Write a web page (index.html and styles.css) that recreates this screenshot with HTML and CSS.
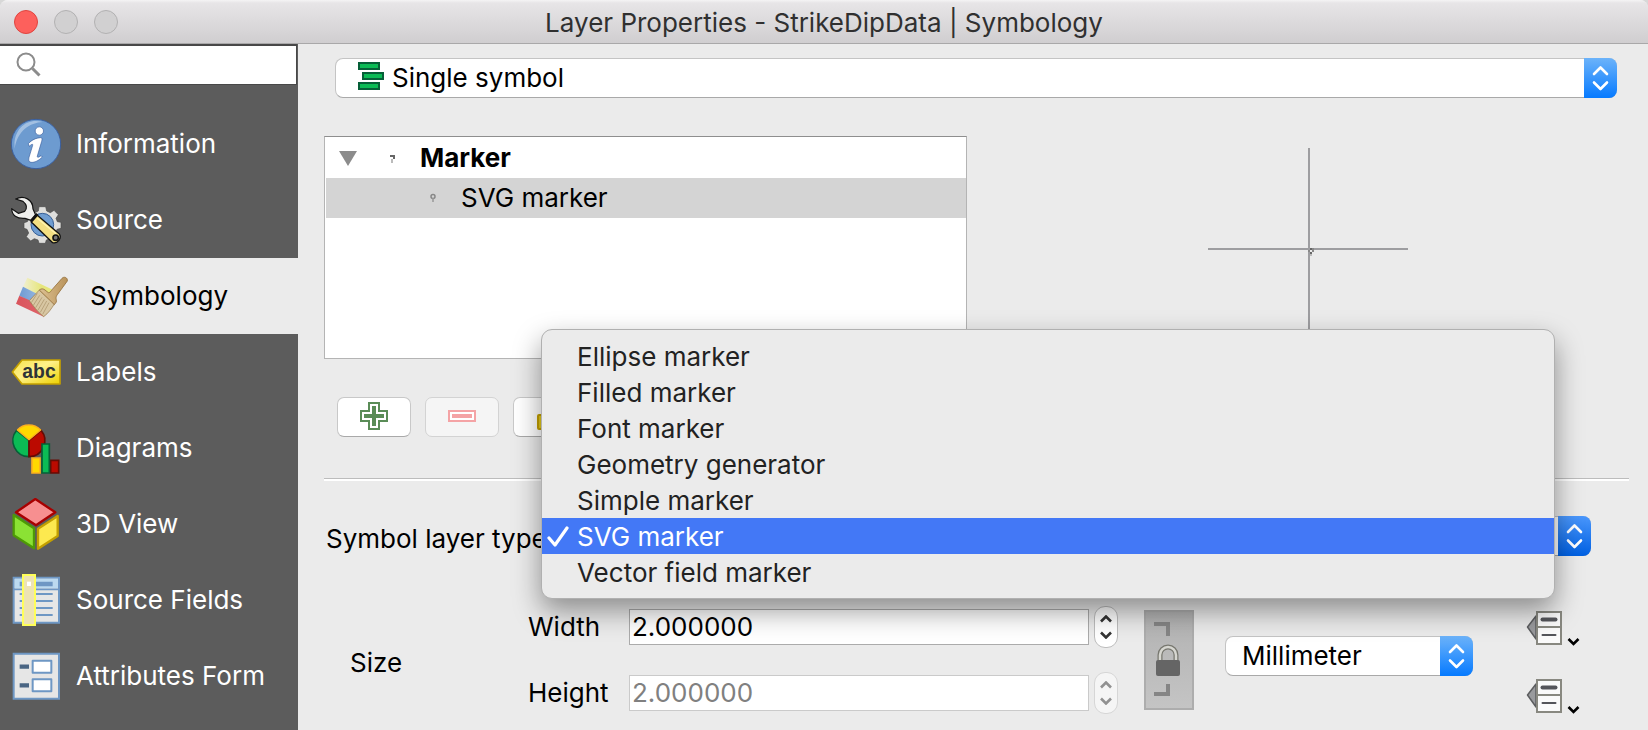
FILE: index.html
```html
<!DOCTYPE html>
<html lang="en">
<head>
<meta charset="utf-8">
<title>Layer Properties - StrikeDipData | Symbology</title>
<link rel="stylesheet" href="styles.css">
</head>
<body>
<svg class="defs" aria-hidden="true">
  <symbol id="updown" viewBox="0 0 33 40"><path d="M10 16l6.500-6.500L23 16M10 24.500l6.500 6.500L23 24.500" fill="none" stroke="#fff" stroke-width="2.600" stroke-linecap="round" stroke-linejoin="round"/></symbol>
  <symbol id="override" viewBox="0 0 54 38">
    <path d="M10 5L1.500 16L10 28z" fill="#999a9d" stroke="#5c5d5f" stroke-width="1.500" stroke-linejoin="round"/>
    <path d="M11 1h24v32H11zM11 16h24" fill="#fafafa" stroke="#888880" stroke-width="2"/>
    <path d="M16.500 8.500h13" stroke="#54555a" stroke-width="4" stroke-linecap="round"/>
    <path d="M16.500 24h13" stroke="#54555a" stroke-width="2" stroke-linecap="round"/>
    <path d="M42.500 28l5 5l5-5" fill="none" stroke="#000" stroke-width="2.600"/>
  </symbol>
</svg>
<div class="window">
  <header class="titlebar">
    <div class="lights">
      <button class="light close" aria-label="Close"></button>
      <button class="light" aria-label="Minimize"></button>
      <button class="light" aria-label="Zoom"></button>
    </div>
    <h1 class="title">Layer Properties - StrikeDipData | Symbology</h1>
  </header>
  <div class="body">
    <aside class="sidebar">
      <div class="search">
        <svg class="search-icon" viewBox="0 0 26 26" aria-hidden="true"><circle cx="10" cy="10" r="8.500" fill="none" stroke="#8c8c8c" stroke-width="2"/><path d="M16.500 16.500l7 7" stroke="#8c8c8c" stroke-width="3"/></svg>
        <input class="search-input" type="text" aria-label="Search">
      </div>
      <nav class="nav">
        <a class="nav-item" href="#information">
          <svg class="nav-icon" viewBox="30 354 156 156" aria-hidden="true">
            <circle cx="108" cy="432" r="74" fill="#6d9bd0" stroke="#3b5f9e" stroke-width="3"/>
            <path d="M44 446C38 386 82 352 128 366C90 368 52 392 44 446z" fill="#a3c0e2"/>
            <circle cx="118" cy="393" r="12.500" fill="#fff" stroke="#3b5f9e" stroke-width="2"/>
            <path d="M85 431C96 419 108 414 122 413C127 413 127 418 125 424L112 468C111 474 116 472 123 467L127 471C116 482 104 488 93 487C86 486 85 480 87 472L98 436C99 431 95 432 88 439z" fill="#fff" stroke="#3b5f9e" stroke-width="2"/>
          </svg>
          <span>Information</span></a>
        <a class="nav-item" href="#source">
          <svg class="nav-icon" viewBox="30 582 156 156" aria-hidden="true">
            <path d="M117 620h20l3 13l11 5l11-7l13 13l-7 11l4 10l11 2v18l-12 3l-4 11l7 11l-13 13l-11-7l-11 4l-3 10h-19l-3-10l-11-4l-11 7l-13-13l7-11l-5-11l-9-3v-17l10-3l5-10l-7-11l13-13l11 7l11-5z" fill="#dededc" stroke="#4a4a4a" stroke-width="2"/>
            <circle cx="127" cy="674" r="34" fill="#6f9dd1" stroke="#365f96" stroke-width="3"/>
            <path d="M47 597C72 584 99 599 99 627L107 645L93 661L75 655C50 657 36 646 35 626L55 640L74 634C83 624 80 613 69 604z" fill="#eeeeec" stroke="#111" stroke-width="3.500" stroke-linejoin="round"/>
            <path d="M111 645l67 57c8 12-5 30-20 26L93 665z" fill="#f3df82" stroke="#111" stroke-width="4" stroke-linejoin="round"/>
            <path d="M112 655l56 46" stroke="#fff3b0" stroke-width="4"/>
            <path d="M112 642l-18 21" stroke="#111" stroke-width="9"/>
            <circle cx="167" cy="713" r="8" fill="#777" stroke="#111" stroke-width="5"/>
          </svg>
          <span>Source</span></a>
        <a class="nav-item current" href="#symbology" aria-current="page">
          <svg class="nav-icon" viewBox="48 60 156 156" aria-hidden="true">
            <defs>
              <linearGradient id="ye" x1="0" x2="1"><stop offset="0" stop-color="#f1efd0"/><stop offset=".6" stop-color="#e6e67c"/></linearGradient>
              <linearGradient id="bl" x1="0" x2="1"><stop offset="0" stop-color="#6f9bd3"/><stop offset="1" stop-color="#a5c3e6"/></linearGradient>
              <linearGradient id="rd" x1="0" x2="1"><stop offset="0" stop-color="#d9545c"/><stop offset="1" stop-color="#e0646b"/></linearGradient>
              <linearGradient id="wd" x1="0" x2="1"><stop offset="0" stop-color="#dcc092"/><stop offset="1" stop-color="#b9935a"/></linearGradient>
            </defs>
            <path d="M82 83L160 120L140 150L69 110z" fill="url(#ye)"/>
            <path d="M69 110L140 146L130 175L58 137z" fill="url(#bl)"/>
            <path d="M58 137L142 174L131 200L48 161z" fill="url(#rd)"/>
            <path d="M118 120L88 152C100 168 112 185 131 200C145 190 155 175 163 162z" fill="#d8c7a3" stroke="#957546" stroke-width="2"/>
            <path d="M112 130l-18 28M119 136l-19 30M126 142l-19 31M133 148l-19 32M140 153l-19 34M147 158l-19 35" stroke="#a89067" stroke-width="2"/>
            <path d="M118 120C124 115 130 116 135 120L145 128C151 128 153 123 157 118L186 85C192 78 204 83 202 93L172 134C165 143 170 147 169 156L163 164z" fill="url(#wd)" stroke="#94703d" stroke-width="2.500"/>
          </svg>
          <span>Symbology</span></a>
        <a class="nav-item" href="#labels">
          <svg class="nav-icon" viewBox="30 288 156 156" aria-hidden="true">
            <defs><linearGradient id="tag" x2="1" y2="1"><stop offset="0" stop-color="#f7e34c"/><stop offset=".45" stop-color="#fff18a"/><stop offset="1" stop-color="#ecd000"/></linearGradient></defs>
            <path d="M37 366L66 330H180V402H66z" fill="url(#tag)" stroke="#c4a000" stroke-width="5" stroke-linejoin="round"/>
            <text class="tag-text" x="67" y="384">abc</text>
          </svg>
          <span>Labels</span></a>
        <a class="nav-item" href="#diagrams">
          <svg class="nav-icon" viewBox="30 516 156 156" aria-hidden="true">
            <path d="M87 571V620A48 48 0 0 1 50 541z" fill="#0bbb55" stroke="#065f38" stroke-width="5" stroke-linejoin="round"/>
            <path d="M87 571V620A48 48 0 0 0 123 541z" fill="#bb0a00" stroke="#660b04" stroke-width="5" stroke-linejoin="round"/>
            <path d="M87 569L52 540C70 520 103 520 122 540z" fill="#ffd800" stroke="#fcaf1f" stroke-width="4" stroke-linejoin="round"/>
            <path d="M96 624h24v45h-24z" fill="#ffd800" stroke="#fcaf1f" stroke-width="5"/>
            <path d="M152 631h24v38h-24z" fill="#bb0a00" stroke="#660b04" stroke-width="5"/>
            <path d="M126 582h22v87h-22z" fill="#0bbb55" stroke="#065f38" stroke-width="5"/>
          </svg>
          <span>Diagrams</span></a>
        <a class="nav-item" href="#view3d">
          <svg class="nav-icon" viewBox="30 54 156 156" aria-hidden="true">
            <g stroke-width="7" stroke-linejoin="round"><path d="M106 57L166 97L108 136L48 97z" fill="#f78f90" stroke="#a80000"/>
            <path d="M41 105L102 145V205L41 166z" fill="#8be234" stroke="#4d9a06"/>
            <path d="M173 108L114 146V206L173 168z" fill="#fde94f" stroke="#c4a000"/></g>
          </svg>
          <span>3D View</span></a>
        <a class="nav-item" href="#fields">
          <svg class="nav-icon" viewBox="30 282 156 156" aria-hidden="true">
            <path d="M41 293h136v135H41z" fill="#e6e6e6" stroke="#6e97c4" stroke-width="6"/>
            <path d="M44 296h130v29H44z" fill="#bcdaf0"/>
            <path d="M41 328h136" stroke="#6e97c4" stroke-width="5"/>
            <path d="M59 312h99" stroke="#6e97c4" stroke-width="13"/>
            <path d="M59 342h99M59 363h99M59 384h99M59 405h99" stroke="#6e97c4" stroke-width="6"/>
            <path d="M69 285h36v150H69z" fill="#ede3b4" stroke="#ffff58" stroke-width="6"/>
            <path d="M81 305h12v13H81z" fill="#fff"/>
          </svg>
          <span>Source Fields</span></a>
        <a class="nav-item" href="#form">
          <svg class="nav-icon" viewBox="30 510 156 156" aria-hidden="true">
            <path d="M41 521h136v135H41z" fill="#e6e6e6" stroke="#6e97c4" stroke-width="6"/>
            <path d="M59 560h28M59 616h28" stroke="#4a6583" stroke-width="13"/>
            <path d="M98 542h56v36H98zM98 598h56v36H98z" fill="#fff" stroke="#6e97c4" stroke-width="6" stroke-linejoin="round"/>
          </svg>
          <span>Attributes Form</span></a>
      </nav>
    </aside>
    <main class="main">
      <div class="combo renderer">
        <svg class="renderer-icon" viewBox="0 0 26 28" aria-hidden="true"><g fill="#0bbb55" stroke="#065f38" stroke-width="2"><path d="M1 1h20v6H1zM5 11h20v6H5zM1 21h20v6H1z"/></g></svg>
        <select class="select" aria-label="Renderer"><option>Single symbol</option></select>
        <svg class="arrows" aria-hidden="true"><use href="#updown"/></svg>
      </div>
      <div class="upper">
        <ul class="tree" role="tree">
          <li class="tree-row" role="treeitem" aria-expanded="true">
            <svg class="disclosure" viewBox="0 0 18 15" aria-hidden="true"><path d="M0 0h18L9 15z" fill="#8c8c8c"/></svg>
            <svg class="dot" viewBox="0 0 6 10" aria-hidden="true"><path d="M1 3h4v3" fill="none" stroke="#666" stroke-width="2"/><path d="M3 6v4" stroke="#bbb" stroke-width="2"/></svg>
            <b>Marker</b>
          </li>
          <li class="tree-row child selected" role="treeitem" aria-selected="true">
            <svg class="dot" viewBox="0 0 6 10" aria-hidden="true"><circle cx="3" cy="3.500" r="2" fill="none" stroke="#888" stroke-width="1.500"/><path d="M3 5v4" stroke="#999" stroke-width="1.500"/></svg>
            <span>SVG marker</span>
          </li>
        </ul>
        <svg class="preview" viewBox="0 0 200 200" role="img" aria-label="Symbol preview"><path d="M0 101h200M101 0v200" stroke="#9d9da0" stroke-width="2"/><path d="M102 100h2v2h-2zM102 104h2v2h-2z" fill="#666"/><path d="M100 102h2v2h-2zM104 100h2v4h-2z" fill="#888"/><path d="M102 106h2v2h-2z" fill="#bbb"/></svg>
        <div class="tools">
          <button class="tool" aria-label="Add symbol layer"><svg class="tool-icon" viewBox="0 0 28 28"><path d="M9 1h10v8h8v10h-8v8H9v-8H1V9h8z" fill="#fff" stroke="#5a8c57" stroke-width="2"/><path d="M14 4v20M4 14h20" stroke="#5a8c57" stroke-width="4"/></svg></button>
          <button class="tool" disabled aria-label="Remove symbol layer"><svg class="tool-icon" viewBox="0 0 28 28"><path d="M1 9h26v10H1z" fill="#fff" stroke="#f4a3a5" stroke-width="2"/><path d="M4 14h20" stroke="#f4a3a5" stroke-width="4"/></svg></button>
          <button class="tool" aria-label="Lock layer colour"><svg class="tool-icon" viewBox="0 0 28 28"><path d="M8 12V7a6 6 0 0 1 12 0v5" fill="none" stroke="#999" stroke-width="3"/><rect x="2" y="13" width="24" height="14" rx="1" fill="#e6cc1a" stroke="#c4a000" stroke-width="2"/></svg></button>
        </div>
      </div>
      <hr class="rule">
      <div class="type-row">
        <label class="type-label" for="layer-type">Symbol layer type</label>
        <div class="combo">
          <select class="select" id="layer-type"><option>SVG marker</option></select>
          <svg class="arrows pressed" aria-hidden="true"><use href="#updown"/></svg>
          <ul class="menu" role="listbox" aria-label="Symbol layer type">
            <li class="menu-item" role="option">Ellipse marker</li>
            <li class="menu-item" role="option">Filled marker</li>
            <li class="menu-item" role="option">Font marker</li>
            <li class="menu-item" role="option">Geometry generator</li>
            <li class="menu-item" role="option">Simple marker</li>
            <li class="menu-item chosen" role="option" aria-selected="true"><svg class="check" viewBox="0 0 22 22" aria-hidden="true"><path d="M2 12l6 7L20 2" fill="none" stroke="#fff" stroke-width="3.200" stroke-linecap="round" stroke-linejoin="round"/></svg>SVG marker</li>
            <li class="menu-item" role="option">Vector field marker</li>
          </ul>
        </div>
      </div>
      <div class="size-row">
        <span class="size-label">Size</span>
        <div class="fields">
          <label class="field-label" for="w">Width</label>
          <input class="number" id="w" type="text" value="2.000000">
          <div class="spinner"><button class="step" aria-label="Increase width"><svg class="step-icon" viewBox="0 0 12 8"><path d="M1 6.500l5-5l5 5" fill="none" stroke="currentColor" stroke-width="2.600"/></svg></button><button class="step" aria-label="Decrease width"><svg class="step-icon" viewBox="0 0 12 8"><path d="M1 1.500l5 5l5-5" fill="none" stroke="currentColor" stroke-width="2.600"/></svg></button></div>
          <label class="field-label" for="h">Height</label>
          <input class="number" id="h" type="text" value="2.000000" disabled>
          <div class="spinner off"><button class="step" disabled aria-label="Increase height"><svg class="step-icon" viewBox="0 0 12 8"><path d="M1 6.500l5-5l5 5" fill="none" stroke="currentColor" stroke-width="2.600"/></svg></button><button class="step" disabled aria-label="Decrease height"><svg class="step-icon" viewBox="0 0 12 8"><path d="M1 1.500l5 5l5-5" fill="none" stroke="currentColor" stroke-width="2.600"/></svg></button></div>
        </div>
        <button class="ratio" aria-label="Lock aspect ratio" aria-pressed="true">
          <svg class="ratio-icon" viewBox="0 0 50 100"><path d="M10 14h14v12" fill="none" stroke="#858585" stroke-width="4"/><path d="M10 84h14V74" fill="none" stroke="#858585" stroke-width="4"/><path d="M16 52V45a8 8 0 0 1 16 0v7" fill="none" stroke="#77776f" stroke-width="5"/><path d="M16 52V45a8 8 0 0 1 16 0v7" fill="none" stroke="#d6d6d0" stroke-width="2.500"/><rect x="12" y="50" width="24" height="16" rx="2" fill="#656565"/></svg>
        </button>
        <div class="combo unit">
          <select class="select" aria-label="Unit"><option>Millimeter</option></select>
          <svg class="arrows" aria-hidden="true"><use href="#updown"/></svg>
        </div>
        <div class="overrides">
          <button class="override" aria-label="Width override"><svg class="override-icon"><use href="#override"/></svg></button>
          <button class="override" aria-label="Height override"><svg class="override-icon"><use href="#override"/></svg></button>
        </div>
      </div>
    </main>
  </div>
</div>
</body>
</html>
```
FILE: styles.css
```css
* { box-sizing: border-box; }
body {
  margin: 0;
  background: #d8d8d8;
  color: #000;
  font: 26px/36px Inter, "Liberation Sans", sans-serif;
  overflow: hidden;
}
button, input, select { font: inherit; color: inherit; margin: 0; padding: 0; }
button { border: 0; background: none; }
ul { list-style: none; margin: 0; padding: 0; }
svg { display: block; }
.defs { position: absolute; width: 0; height: 0; }

.window {
  display: flex;
  flex-direction: column;
  height: 100vh;
  overflow: hidden;
  border-radius: 8px 8px 0 0;
  background: #ebebeb;
}
.titlebar {
  display: grid;
  grid-template-columns: 1fr auto 1fr;
  align-items: center;
  flex: none;
  height: 44px;
  padding: 0 14px;
  background: linear-gradient(#f5f4f5, #e7e5e7 3px, #d0ced0);
  border-bottom: 1px solid #a9a8a9;
}
.lights { display: flex; gap: 16px; }
.light { width: 24px; height: 24px; border-radius: 50%; border: 1px solid #b2b1b2; background: #d1d0d1; }
.close { background: #fd605c; border-color: #e0443f; }
.title { margin: 0; padding-top: 2px; font-size: 26px; font-weight: 400; color: #303030; }

.body { display: flex; flex: 1; min-height: 0; }
.sidebar { flex: none; width: 298px; background: #5c5c5c; overflow: hidden; }
.search {
  display: flex;
  align-items: center;
  height: 41px;
  margin-right: 1px;
  padding-left: 16px;
  gap: 8px;
  background: #fff;
  border: solid #484848;
  border-width: 2px 1px 1px 0;
}
.search-icon { width: 26px; height: 26px; }
.search-input { flex: 1; min-width: 0; border: 0; outline: 0; background: none; }
.nav { padding-top: 21px; }
.nav-item {
  display: flex;
  align-items: center;
  gap: 14px;
  height: 76px;
  padding-left: 10px;
  color: #fff;
  text-decoration: none;
  white-space: nowrap;
}
.current { padding-left: 16px; gap: 22px; background: #ebebeb; color: #000; }
.nav-icon { width: 52px; height: 52px; }
.tag-text { font: bold 58px "Liberation Sans", sans-serif; fill: #2e3436; }

.main { flex: 1; min-width: 0; padding: 14px 19px 0 26px; }
.combo {
  position: relative;
  height: 40px;
  border: 1px solid #c4c4c4;
  border-bottom-color: #a9a9a9;
  border-radius: 8px;
  background: #fff;
}
.select {
  width: 100%;
  height: 100%;
  padding: 0 40px 0 16px;
  border: 0;
  background: none;
  appearance: none;
}
.arrows {
  position: absolute;
  top: -1px;
  right: -1px;
  width: 33px;
  height: 40px;
  border-radius: 0 8px 8px 0;
  background: linear-gradient(#6cb3fa, #067aff);
  pointer-events: none;
}
.pressed { background: linear-gradient(#4a97fc, #0060e2); }
.renderer { margin: 0 12px 0 11px; }
.renderer .select { padding-left: 56px; }
.renderer-icon { position: absolute; left: 22px; top: 3px; width: 26px; height: 28px; }

.upper { display: grid; grid-template-columns: 1fr 1fr; column-gap: 20px; margin-top: 38px; }
.tree { height: 223px; padding: 1px 0 0 1px; background: #fff; border: 1px solid #b4b4b4; border-top-color: #8e8e8e; }
.tree-row { display: flex; align-items: center; height: 40px; padding-left: 13px; }
.child { padding-left: 104px; }
.selected { background: #d4d4d4; }
.disclosure { width: 18px; height: 15px; margin-right: 32px; }
.dot { width: 6px; height: 10px; margin-right: 25px; }
.preview { width: 200px; height: 200px; margin-top: 12px; justify-self: center; }
.tools { display: flex; gap: 14px; padding: 38px 0 0 13px; }
.tool {
  display: grid;
  justify-content: center;
  width: 74px;
  height: 40px;
  padding-top: 4px;
  background: #fff;
  border: 1px solid #c8c8c8;
  border-bottom-color: #a9a9a9;
  border-radius: 7px;
}
.tool:disabled { background: #f5f5f5; border-color: #d3d3d3; }
.tool-icon { width: 28px; height: 28px; }
.rule { height: 3px; margin: 41px 0 35px; border: 0; border-top: 1px solid #bcbcbc; background: #fff; }

.type-row { display: grid; grid-template-columns: 215px 1fr; padding: 0 38px 0 2px; }
.type-label { padding-top: 5px; white-space: nowrap; }
.menu {
  position: absolute;
  z-index: 1;
  top: -188px;
  left: -1px;
  right: 35px;
  padding: 8px 0;
  background: #ebebeb;
  border: 1px solid #b0b0b0;
  border-radius: 11px;
  box-shadow: 0 12px 28px rgba(0, 0, 0, .4);
}
.menu-item { position: relative; height: 36px; padding: 1px 0 0 35px; color: #222; }
.chosen { background: #4378f6; color: #fff; }
.check { position: absolute; left: 5px; top: 8px; width: 22px; height: 22px; }

.size-row { display: flex; align-items: center; padding: 46px 49px 0 26px; }
.size-label { width: 178px; padding-top: 6px; }
.fields { flex: 1; min-width: 0; display: grid; grid-template-columns: 101px 1fr 24px; row-gap: 24px; align-items: center; }
.number {
  width: 100%;
  height: 36px;
  padding: 0 2px;
  border: 1px solid #ababab;
  background: #fff;
}
.number:disabled { color: #808080; border-color: #cacaca; }
.spinner {
  display: flex;
  flex-direction: column;
  justify-content: space-between;
  height: 42px;
  margin-left: 5px;
  width: 24px;
  padding: 8px 0;
  border: 1px solid #bdbdbd;
  border-radius: 11px;
  background: #fff;
  color: #333;
}
.off { background: #f5f5f5; border-color: #d6d6d6; color: #919191; }
.step { display: grid; justify-content: center; color: inherit; }
.step-icon { width: 12px; height: 8px; }
.ratio { width: 50px; height: 100px; margin: 0 31px; background: linear-gradient(#b2b2b2, #c4c4c4); border: 2px solid #adadad; }
.ratio-icon { width: 50px; height: 100px; margin: -2px; }
.unit { flex: none; width: 248px; margin-bottom: 8px; }
.overrides { display: grid; gap: 30px; margin: 8px 0 0 53px; }
.override-icon { width: 54px; height: 38px; }
```
